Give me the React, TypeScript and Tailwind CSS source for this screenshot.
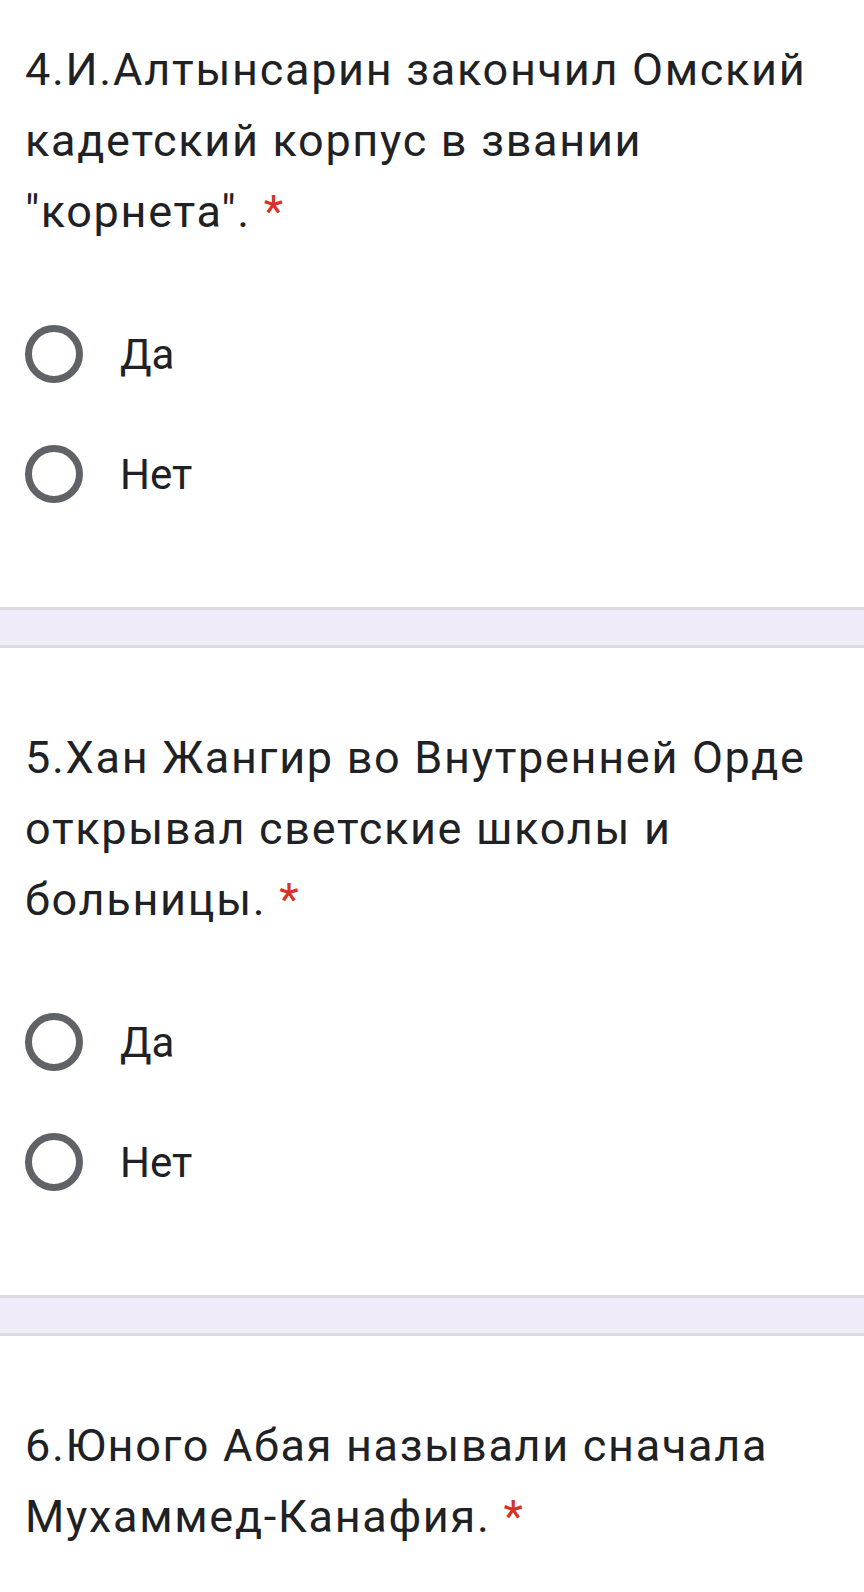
const questions = [
  { title: "4.И.Алтынсарин закончил Омский кадетский корпус в звании \"корнета\".", options: ["Да", "Нет"] },
  { title: "5.Хан Жангир во Внутренней Орде открывал светские школы и больницы.", options: ["Да", "Нет"] },
  { title: "6.Юного Абая называли сначала Мухаммед-Канафия.", options: [] as string[] },
];

const Radio = ({ label }: { label: string }) => (
  <div className="flex h-[120px] items-center">
    <span className="ml-[25px] block h-[58px] w-[58px] rounded-full border-[7px] border-[#5f6368]" />
    <span className="ml-[37px] text-[42px] text-[#202124]">{label}</span>
  </div>
);

export default function App() {
  return (
    <main className="w-[864px] bg-white font-['Roboto',sans-serif] overflow-hidden">
      <div className="-mt-[40px]">
        {questions.map((q, i) => (
          <div key={i}>
            {i > 0 && (
              <div className="h-[41px] border-y-[3px] border-[#dadce0] bg-[#efebf8]" />
            )}
            <section className="pt-[74px] pb-[73px]">
              <h2 className="pl-[25px] pr-[10px] text-[45px] leading-[71px] tracking-[1.7px] text-[#202124] font-normal">
                {q.title} <span className="text-[#d93025]">*</span>
              </h2>
              {q.options.length > 0 && (
                <div className="mt-[47px]">
                  {q.options.map((o) => (
                    <Radio key={o} label={o} />
                  ))}
                </div>
              )}
            </section>
          </div>
        ))}
      </div>
    </main>
  );
}
